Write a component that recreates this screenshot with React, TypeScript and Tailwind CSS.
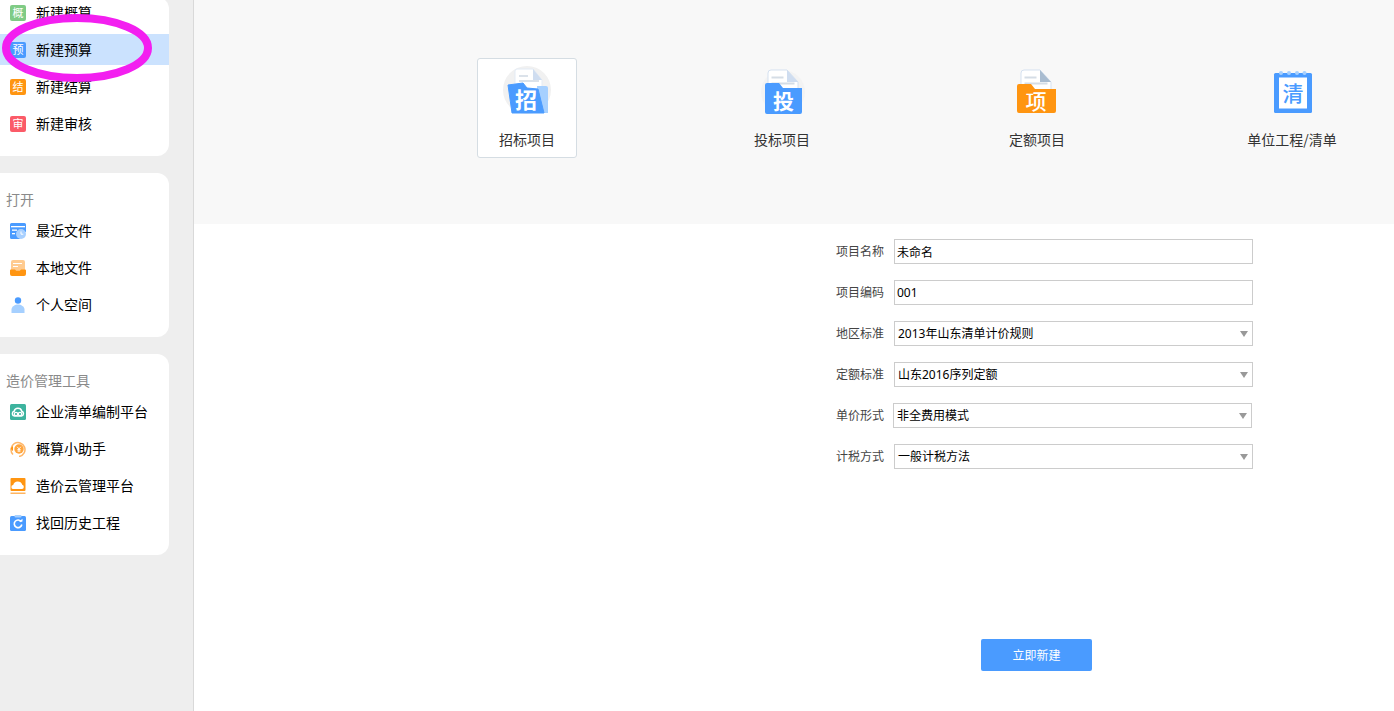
import type { ReactNode } from 'react';

function LetterBadge({ text, color }: { text: string; color: string }) {
  return (
    <span className={`flex h-4 w-4 items-center justify-center rounded-[2px] text-[11px] leading-none text-white ${color}`}>
      {text}
    </span>
  );
}

function RecentIcon() {
  return (
    <svg width="16" height="16" viewBox="0 0 16 16">
      <path d="M1.5 0h13A1.5 1.5 0 0 1 16 1.5V9a5 5 0 0 0-6 7H1.5A1.5 1.5 0 0 1 0 14.5V1.5A1.5 1.5 0 0 1 1.5 0z" fill="#4a9bff" />
      <rect x="1" y="3" width="14" height="1.3" fill="#fff" />
      <rect x="2" y="6.5" width="5" height="1.3" fill="#fff" />
      <rect x="2" y="10" width="3" height="1.3" fill="#fff" />
      <circle cx="11" cy="11" r="5" fill="#a8d0ff" />
      <path d="M11 8.5v2.7h2.3" fill="none" stroke="#fff" strokeWidth="1" />
    </svg>
  );
}

function LocalIcon() {
  return (
    <svg width="16" height="16" viewBox="0 0 16 16">
      <rect x="1" y="0" width="14" height="12" rx="2" fill="#ffcb90" />
      <rect x="3" y="3" width="9" height="1" fill="#fff" />
      <rect x="3" y="6" width="5" height="1" fill="#fff" />
      <path d="M0 10.5a1 1 0 0 1 1-1h4l1.2 1.2h3.6L11 9.5h4a1 1 0 0 1 1 1V14a2 2 0 0 1-2 2H2a2 2 0 0 1-2-2z" fill="#ff9511" />
    </svg>
  );
}

function PersonIcon() {
  return (
    <svg width="16" height="16" viewBox="0 0 16 16">
      <circle cx="8" cy="3.5" r="3.2" fill="#4a9bff" />
      <path d="M1.5 16v-3.5C1.5 9.5 5 7.5 8 7.5s6.5 2 6.5 5V16z" fill="#a6d0ff" />
    </svg>
  );
}

function TeamIcon() {
  return (
    <svg width="16" height="16" viewBox="0 0 16 16">
      <rect width="16" height="16" rx="1.5" fill="#3db39e" />
      <path d="M4.5 12a2.4 2.4 0 0 1-.4-4.7A4 4 0 0 1 11.8 7.2 2.5 2.5 0 0 1 11.5 12z" fill="none" stroke="#fff" strokeWidth="1.5" />
      <circle cx="6" cy="10" r="1.7" fill="none" stroke="#fff" strokeWidth="1.2" />
      <circle cx="10" cy="10" r="1.7" fill="none" stroke="#fff" strokeWidth="1.2" />
    </svg>
  );
}

function HelperIcon() {
  return (
    <svg width="16" height="16" viewBox="0 0 16 16">
      <path d="M3 13.5A7 7 0 1 1 9 15.5" fill="none" stroke="#ffb769" strokeWidth="1.5" />
      <path d="M1 7.5A3 3 0 0 1 3 5v5a3 3 0 0 1-2-2.5z" fill="#ff9511" />
      <circle cx="9" cy="8" r="4.7" fill="#ffa53d" />
      <path d="M7.2 5.8 9 8l1.8-2.2M9 8v3M7.4 8.5h3.2M7.4 10h3.2" fill="none" stroke="#fff" strokeWidth="0.9" />
    </svg>
  );
}

function CloudIcon() {
  return (
    <svg width="16" height="16" viewBox="0 0 16 16">
      <rect width="15" height="13" x="0.5" rx="1" fill="#ff9511" />
      <path d="M3.5 11a2 2 0 0 1-.3-4 4.7 4.7 0 0 1 9-.3A2.2 2.2 0 0 1 12 11z" fill="#fff" />
      <rect x="0.5" y="14.5" width="15" height="1.5" fill="#ffb561" />
    </svg>
  );
}

function HistoryIcon() {
  return (
    <svg width="16" height="16" viewBox="0 0 16 16">
      <rect y="1" width="16" height="15" rx="1.5" fill="#4a9bff" />
      <rect x="4.5" y="0" width="7" height="2.5" rx="1" fill="#a6d0ff" />
      <path d="M11.3 6.8A3.8 3.8 0 1 0 11.8 9.5" fill="none" stroke="#fff" strokeWidth="1.6" />
      <path d="M9 6.6h3.5V3.8z" fill="#fff" />
    </svg>
  );
}

function DocSheet({ x, fold }: { x: number; fold: string }) {
  return (
    <g>
      <path d={`M${x + 3} 4h16l11 12v16H${x}V7a3 3 0 0 1 3-3z`} fill="#fff" stroke="#d5e1f0" strokeWidth="1" />
      <path d={`M${x + 19} 4l11 12h-11z`} fill={fold} />
      <rect x={x + 3.5} y="10.5" width="12" height="2" fill="#d5dde6" />
      <rect x={x + 3.5} y="16.5" width="23" height="2" fill="#d5dde6" />
    </g>
  );
}

function BidIcon() {
  return (
    <svg width="48" height="48" viewBox="0 0 48 48">
      <circle cx="24" cy="24" r="24" fill="#f1f1f1" />
      <path d="M12 5a2 2 0 0 1 2-2h16l9 11v18H12z" fill="#fff" stroke="#e3ebf5" />
      <path d="M30 3l9 11h-9z" fill="#cfddf0" />
      <rect x="16" y="9" width="9" height="2" fill="#dbe2ea" />
      <rect x="16" y="14" width="20" height="2" fill="#dbe2ea" />
      <path d="M34 20h9a2 2 0 0 1 2 2v25H36z" fill="#a6d0ff" />
      <path d="M5 19l15-2 4 5 11 1 6 24H9z" fill="#4a9bff" strokeLinejoin="round" stroke="#4a9bff" strokeWidth="1" />
      <text x="23" y="42" textAnchor="middle" fontSize="22" fontWeight="700" fill="#fff">招</text>
    </svg>
  );
}

function TenderIcon() {
  return (
    <svg width="48" height="48" viewBox="0 0 48 48">
      <circle cx="25" cy="26" r="22" fill="#f3f3f3" />
      <DocSheet x={10} fold="#cfddf0" />
      <path d="M7 19a2 2 0 0 1 2-2h12l4 5h19v24a2 2 0 0 1-2 2H9a2 2 0 0 1-2-2z" fill="#4a9bff" />
      <text x="25.5" y="43" textAnchor="middle" fontSize="21" fontWeight="700" fill="#fff">投</text>
    </svg>
  );
}

function QuotaIcon() {
  return (
    <svg width="48" height="48" viewBox="0 0 48 48">
      <DocSheet x={8} fold="#a9bcd0" />
      <path d="M4 20a2 2 0 0 1 2-2h12l4 5h21v22a2 2 0 0 1-2 2H6a2 2 0 0 1-2-2z" fill="#ff9511" />
      <text x="23" y="43" textAnchor="middle" fontSize="21" fontWeight="500" fill="#fff">项</text>
    </svg>
  );
}

function ListIcon() {
  return (
    <svg width="48" height="48" viewBox="0 0 48 48">
      <rect x="6" y="7" width="38" height="40" rx="1.5" fill="#4a9bff" />
      <rect x="11" y="11.5" width="28" height="31" fill="#fff" />
      {[13, 21, 29, 36.5].map((cx) => (
        <circle key={cx} cx={cx} cy="7" r="2" fill="#a6d0ff" />
      ))}
      <text x="25" y="34.5" textAnchor="middle" fontSize="21" fontWeight="500" fill="#4a9bff">清</text>
    </svg>
  );
}

function SideItem({ icon, label, active }: { icon: ReactNode; label: string; active?: boolean }) {
  return (
    <div className={`mb-[6px] flex h-[31px] items-center pl-[10px] text-sm text-black last:mb-0 ${active ? 'bg-[#cbe2fe]' : ''}`}>
      <span className="mr-[10px] flex h-4 w-4 shrink-0">{icon}</span>
      {label}
    </div>
  );
}

function Card({ title, children, top }: { title?: string; children: ReactNode; top?: boolean }) {
  return (
    <section className={`w-[169px] overflow-hidden rounded-r-xl bg-white pb-[17px] ${top ? '-mt-[3px]' : 'pt-4'}`}>
      {title && <h2 className="mb-[5px] pl-[6px] text-sm leading-[21px] font-normal text-[#8a8a8a]">{title}</h2>}
      {children}
    </section>
  );
}

function Tile({ icon, label, selected }: { icon: ReactNode; label: string; selected?: boolean }) {
  return (
    <div
      className={`flex h-[100px] w-[100px] shrink-0 flex-col items-center rounded-[3px] border pt-[7px] ${
        selected ? 'border-[#d5dde3] bg-white' : 'border-transparent'
      }`}
    >
      {icon}
      <div className="mt-[15px] font-['Noto_Sans_CJK_SC',sans-serif] text-sm leading-5 whitespace-nowrap text-[#333]">{label}</div>
    </div>
  );
}

function FormRow({ label, tight, children }: { label: string; tight?: boolean; children: ReactNode }) {
  return (
    <div className="flex h-[25px] items-center">
      <label className={`w-[54px] text-right text-xs text-[#444] ${tight ? 'mr-[9px]' : 'mr-[10px]'}`}>{label}</label>
      {children}
    </div>
  );
}

function TextField({ value }: { value: string }) {
  return (
    <input
      readOnly
      value={value}
      className="h-[25px] w-[359px] border border-[#ccc] px-[2px] text-xs text-black outline-none"
    />
  );
}

function SelectField({ value }: { value: string }) {
  return (
    <div className="flex h-[25px] w-[359px] items-center justify-between border border-[#ccc] pr-[4px] pl-[3px] text-xs text-black">
      <span>{value}</span>
      <svg width="8" height="6" viewBox="0 0 8 6">
        <path d="M0 0h8L4 6z" fill="#999" />
      </svg>
    </div>
  );
}

export default function App() {
  return (
    <div className="relative flex h-[711px] w-[1394px] overflow-hidden bg-white font-['Noto_Sans','Noto_Sans_CJK_SC',sans-serif]">
      <aside className="flex w-[194px] shrink-0 flex-col gap-[17px] border-r border-[#d9d9d9] bg-[#eeeeee]">
        <Card top>
          <SideItem icon={<LetterBadge text="概" color="bg-[#7fcb85]" />} label="新建概算" />
          <SideItem icon={<LetterBadge text="预" color="bg-[#4a9bff]" />} label="新建预算" active />
          <SideItem icon={<LetterBadge text="结" color="bg-[#ff9511]" />} label="新建结算" />
          <SideItem icon={<LetterBadge text="审" color="bg-[#fb5b68]" />} label="新建审核" />
        </Card>
        <Card title="打开">
          <SideItem icon={<RecentIcon />} label="最近文件" />
          <SideItem icon={<LocalIcon />} label="本地文件" />
          <SideItem icon={<PersonIcon />} label="个人空间" />
        </Card>
        <Card title="造价管理工具">
          <SideItem icon={<TeamIcon />} label="企业清单编制平台" />
          <SideItem icon={<HelperIcon />} label="概算小助手" />
          <SideItem icon={<CloudIcon />} label="造价云管理平台" />
          <SideItem icon={<HistoryIcon />} label="找回历史工程" />
        </Card>
      </aside>

      <main className="min-w-0 flex-1">
        <div className="flex h-[224px] gap-[155px] bg-[#f8f8f8] pt-[58px] pl-[283px]">
          <Tile icon={<BidIcon />} label="招标项目" selected />
          <Tile icon={<TenderIcon />} label="投标项目" />
          <Tile icon={<QuotaIcon />} label="定额项目" />
          <Tile icon={<ListIcon />} label="单位工程/清单" />
        </div>

        <div className="flex flex-col gap-4 pt-[15px] pl-[636px]">
          <FormRow label="项目名称">
            <TextField value="未命名" />
          </FormRow>
          <FormRow label="项目编码">
            <TextField value="001" />
          </FormRow>
          <FormRow label="地区标准">
            <SelectField value="2013年山东清单计价规则" />
          </FormRow>
          <FormRow label="定额标准">
            <SelectField value="山东2016序列定额" />
          </FormRow>
          <FormRow label="单价形式" tight>
            <SelectField value="非全费用模式" />
          </FormRow>
          <FormRow label="计税方式">
            <SelectField value="一般计税方法" />
          </FormRow>
        </div>

        <button
          type="button"
          className="mt-[170px] ml-[787px] h-8 w-[111px] rounded-[2px] bg-[#4a9bff] pt-px text-xs text-white"
        >
          立即新建
        </button>
      </main>

      {/* hand-drawn highlight on the screenshot */}
      <svg className="pointer-events-none absolute top-0 left-0" width="160" height="90" viewBox="0 0 160 90">
        <ellipse cx="77" cy="48" rx="71" ry="30" fill="none" stroke="#f31ff0" strokeWidth="8" />
      </svg>
    </div>
  );
}
